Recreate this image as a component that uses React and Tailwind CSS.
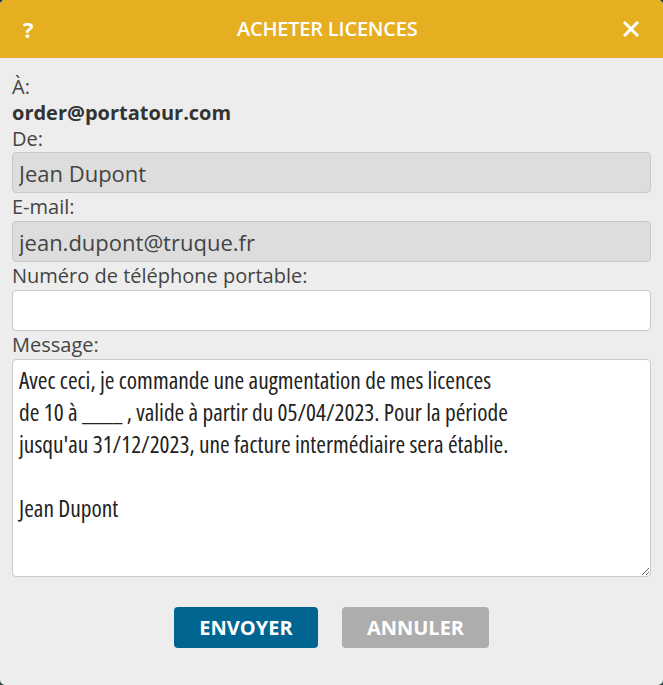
import { useState } from 'react'

const MESSAGE =
  "Avec ceci, je commande une augmentation de mes licences\nde 10 à ____ , valide à partir du 05/04/2023. Pour la période\njusqu'au 31/12/2023, une facture intermédiaire sera établie.\n\nJean Dupont"

function Label({ children, tight }) {
  return (
    <div className={(tight ? 'leading-[26px] ' : 'leading-[28px] ') + 'text-[20px] text-[#444]'}>
      {children}
    </div>
  )
}

export default function App() {
  const [phone, setPhone] = useState('')
  const [message, setMessage] = useState(MESSAGE)

  return (
    <div className="h-[685px] w-[663px] bg-[#263d40] font-['Open_Sans',sans-serif]">
      <div className="flex h-full flex-col overflow-hidden rounded-[5px] bg-[#ededed]">
        {/* Title bar */}
        <div className="flex h-[58px] shrink-0 items-center justify-between bg-[#e6af21] pl-[23px] pr-[22px] text-white">
          <button type="button" className="text-[22px] font-bold leading-none">?</button>
          <h1 className="text-[20px] font-semibold tracking-[-0.2px]">ACHETER LICENCES</h1>
          <button type="button" aria-label="Fermer" className="flex h-5 w-5 items-center justify-center">
            <svg width="16" height="16" viewBox="0 0 16 16" fill="none" stroke="white" strokeWidth="3" strokeLinecap="square">
              <path d="M2 2 L14 14 M14 2 L2 14" />
            </svg>
          </button>
        </div>

        {/* Form */}
        <div className="flex flex-1 flex-col px-3 pt-[16px]">
          <Label tight>À:</Label>
          <div className="text-[20px] font-bold leading-[26px] text-[#333]">order@portatour.com</div>
          <Label tight>De:</Label>
          <input
            readOnly
            value="Jean Dupont"
            className="h-[41px] w-full rounded-[4px] border border-[#c8c8c8] bg-[#dddddd] px-[6px] text-[22px] text-[#444] outline-none"
          />
          <Label>E-mail:</Label>
          <input
            readOnly
            value="jean.dupont@truque.fr"
            className="h-[41px] w-full rounded-[4px] border border-[#c8c8c8] bg-[#dddddd] px-[6px] text-[22px] text-[#444] outline-none"
          />
          <Label>Numéro de téléphone portable:</Label>
          <input
            value={phone}
            onChange={(e) => setPhone(e.target.value)}
            className="h-[41px] w-full rounded-[4px] border border-[#c8c8c8] bg-white px-[6px] text-[22px] text-[#333] outline-none"
          />
          <Label>Message:</Label>
          <textarea
            value={message}
            onChange={(e) => setMessage(e.target.value)}
            className="h-[218px] w-full resize-y rounded-[4px] border border-[#c8c8c8] bg-white px-[6px] pt-[4px] text-[23.4px] leading-[32px] text-[#222] outline-none font-stretch-condensed"
          />

          <div className="mt-[30px] flex justify-center gap-6">
            <button type="button" className="h-[41px] w-[144px] rounded-[4px] bg-[#006591] text-[20px] font-bold text-white">
              ENVOYER
            </button>
            <button type="button" className="h-[41px] w-[147px] rounded-[4px] bg-[#adadad] text-[20px] font-bold text-white">
              ANNULER
            </button>
          </div>
        </div>
      </div>
    </div>
  )
}
